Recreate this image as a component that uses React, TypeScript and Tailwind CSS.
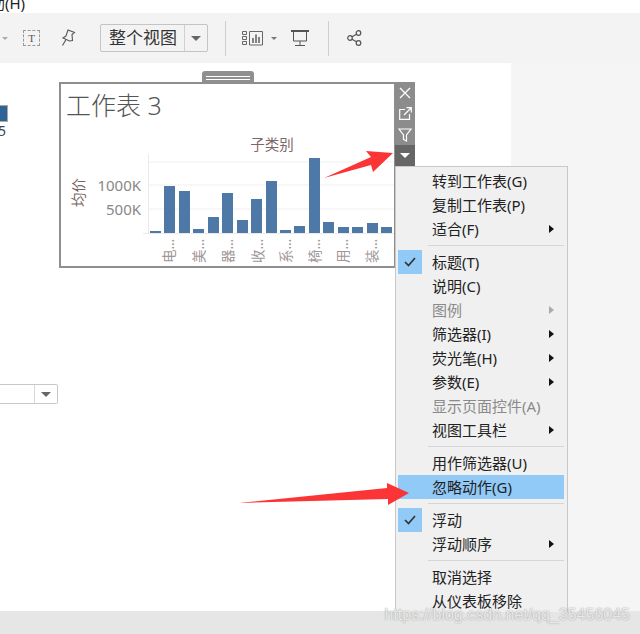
import React from 'react';

const FONT = '[font-family:"Noto_Sans","Noto_Sans_CJK_SC",sans-serif]';

type Entry =
  | { sep: true }
  | { sep?: false; label: string; sub?: boolean; off?: boolean; checked?: boolean; hot?: boolean };

const MENU: Entry[] = [
  { label: '转到工作表(G)' },
  { label: '复制工作表(P)' },
  { label: '适合(F)', sub: true },
  { sep: true },
  { label: '标题(T)', checked: true },
  { label: '说明(C)' },
  { label: '图例', sub: true, off: true },
  { label: '筛选器(I)', sub: true },
  { label: '荧光笔(H)', sub: true },
  { label: '参数(E)', sub: true },
  { label: '显示页面控件(A)', off: true },
  { label: '视图工具栏', sub: true },
  { sep: true },
  { label: '用作筛选器(U)' },
  { label: '忽略动作(G)', hot: true },
  { sep: true },
  { label: '浮动', checked: true },
  { label: '浮动顺序', sub: true },
  { sep: true },
  { label: '取消选择' },
  { label: '从仪表板移除' },
];

// x, top of each bar, baseline is y=233
const BARS = [
  [150, 231], [164, 186], [179, 191], [193, 229], [208, 217], [222, 193], [237, 220], [251, 199],
  [266, 181], [280, 230], [294, 226], [309, 158], [323, 222], [338, 227], [352, 227], [367, 223], [381, 227],
];

const LABELS: [number, string][] = [
  [169, '电…'], [199, '美…'], [228, '器…'], [258, '收…'], [286, '系…'], [315, '椅…'], [343, '用…'], [372, '装…'],
];

const Caret = ({ className = 'border-t-[#666]' }: { className?: string }) => (
  <span className={`block w-0 h-0 border-x-[5px] border-x-transparent border-t-[5px] ${className}`} />
);

const Toolbar = () => (
  <div className="h-[50px] bg-[#f3f3f3] flex items-center relative shrink-0">
    <div className="ml-[2px] w-[5px]"><span className="block w-0 h-0 border-x-[3px] border-x-transparent border-t-[3px] border-t-[#aaa]" /></div>
    <div className="ml-[16px] w-[17px] h-[16px] border border-dashed border-[#999] flex items-center justify-center text-[11px] leading-none text-[#555] [font-family:'Liberation_Serif',serif]">T</div>
    <svg className="ml-[21px]" width="15" height="18" viewBox="0 0 15 18" fill="none" stroke="#555" strokeWidth="1.1">
      <path d="M7 1l6.5 2.5-2.5 2 .5 6-3 .5L2 9l3-2z" />
      <path d="M5 10.5L1.5 16.5" />
    </svg>
    <div className="ml-[24px] w-[108px] h-[28px] border border-[#c4c4c4] rounded-[2px] flex">
      <div className="w-[84px] pl-[8px] text-[17px] leading-[26px] text-[#333] border-r border-[#d0d0d0]">整个视图</div>
      <div className="flex-1 flex items-center justify-center"><Caret /></div>
    </div>
    <div className="ml-[17px] w-[1px] h-[35px] bg-[#cfcfcf]" />
    <svg className="ml-[16px]" width="21" height="15" viewBox="0 0 21 15" fill="none" stroke="#666">
      <path d="M.5.5h4v3h-4zM.5 5.5h4v3h-4zM.5 10.5h4v3h-4zM7.5.5h13v13.5h-13z" />
      <path d="M11 12V7M14 12V3.5M17 12V6" strokeWidth="1.6" />
    </svg>
    <div className="ml-[8px]"><span className="block w-0 h-0 border-x-[3px] border-x-transparent border-t-[3px] border-t-[#777]" /></div>
    <svg className="ml-[14px]" width="18" height="17" viewBox="0 0 18 17" fill="none" stroke="#555">
      <path d="M0 1h18" strokeWidth="2" />
      <path d="M2.5 1.5v9.5h13V1.5M9 11v4.5M4 15.5h10" />
    </svg>
    <div className="ml-[19px] w-[1px] h-[35px] bg-[#cfcfcf]" />
    <svg className="ml-[18px]" width="16" height="16" viewBox="0 0 16 16" fill="none" stroke="#555" strokeWidth="1.2">
      <circle cx="11.5" cy="3" r="2.3" />
      <circle cx="3" cy="8" r="2.3" />
      <circle cx="11.5" cy="13" r="2.3" />
      <path d="M5 6.8l4.5-2.6M5 9.2l4.5 2.6" />
    </svg>
  </div>
);

const Worksheet = () => (
  <div className="absolute left-[59px] top-[82px] w-[337px] h-[186px] border-2 border-[#8f8f8f] bg-white">
    <div className="absolute left-[141px] top-[-13px] w-[52px] h-[13px] bg-[#8f8f8f] rounded-t-[3px] flex flex-col justify-center gap-[2px] px-[4px]">
      <div className="h-[1px] bg-white" />
      <div className="h-[1px] bg-white" />
    </div>
    <div className="pl-[5px] pt-[5px] h-[36px] text-[25px] leading-[32px] text-[#555] font-light">工作表 3</div>
    <svg className="block" width="333" height="146" viewBox="61 120 333 146">
      <path d="M148 162H394M148 185H394M148 209H394" stroke="#efefef" />
      <path d="M143 233.5H394M148.5 154V233" stroke="#eaeaea" />
      {BARS.map(([x, top]) => (
        <rect key={x} x={x} y={top} width={11} height={233 - top} fill="#4e79a7" />
      ))}
      <text x="272" y="150" textAnchor="middle" fontSize="14.5" fill="#7d6666">子类别</text>
      <text x="141" y="191" textAnchor="end" fontSize="15" fill="#888">1000K</text>
      <text x="141" y="215" textAnchor="end" fontSize="15" fill="#888">500K</text>
      <text transform="translate(84 207) rotate(-90)" fontSize="14.5" fill="#77675f">均价</text>
      {LABELS.map(([x, t]) => (
        <text key={x} transform={`translate(${x + 5} 263) rotate(-90)`} fontSize="13.5" fill="#a09696">{t}</text>
      ))}
    </svg>
  </div>
);

const SideButtons = () => (
  <div className="absolute left-[395px] top-[82px] w-[20px] flex flex-col bg-[#8c8c8c]">
    <div className="h-[21px] flex items-center justify-center">
      <svg width="12" height="12" viewBox="0 0 12 12" stroke="#fff" strokeWidth="1.3"><path d="M1 1l10 10M11 1L1 11" /></svg>
    </div>
    <div className="h-[21px] flex items-center justify-center">
      <svg width="13" height="13" viewBox="0 0 13 13" fill="none" stroke="#fff" strokeWidth="1.2"><path d="M6 2.5H.7v9.8h9.8V7M5 8l7-7M7.5.7h4.8v4.8" /></svg>
    </div>
    <div className="h-[21px] flex items-center justify-center">
      <svg width="14" height="14" viewBox="0 0 14 14" fill="none" stroke="#fff" strokeWidth="1.2"><path d="M1 1h12L8.5 7v6l-3-1.5V7z" /></svg>
    </div>
    <div className="h-[21px] bg-[#666] flex items-center justify-center">
      <Caret className="border-t-white" />
    </div>
  </div>
);

const ContextMenu = () => (
  <div className="absolute left-[395px] top-[166px] w-[173px] h-[446px] overflow-hidden bg-[#f0f0f0] border border-b-0 border-[#c8c8c8] pt-[2px] pl-[2px] pr-[3px]">
    {MENU.map((m, i) =>
      m.sep ? (
        <div key={i} className="h-[9px] flex items-center pl-[30px]">
          <div className="h-[1px] w-full bg-[#d6d6d6]" />
        </div>
      ) : (
        <div key={i} className={`h-[24px] flex items-center text-[15px] leading-[24px] ${m.hot ? 'bg-[#91c9f7]' : ''} ${m.off ? 'text-[#8a8a8a]' : 'text-[#222]'}`}>
          <div className={`w-[24px] h-[24px] flex items-center justify-center ${m.checked ? 'bg-[#91c9f7]' : ''}`}>
            {m.checked && (
              <svg width="12" height="10" viewBox="0 0 12 10" fill="none" stroke="#333" strokeWidth="1.7"><path d="M1 5l3.5 3.5L11 1" /></svg>
            )}
          </div>
          <span className="ml-[10px] flex-1 whitespace-nowrap">{m.label}</span>
          {m.sub && (
            <span className={`mr-[10px] block w-0 h-0 border-y-[4px] border-y-transparent border-l-[5px] ${m.off ? 'border-l-[#aaa]' : 'border-l-[#111]'}`} />
          )}
        </div>
      )
    )}
  </div>
);

const App: React.FC = () => {
  return (
    <div className={`relative w-[640px] h-[634px] overflow-hidden flex flex-col bg-white ${FONT}`}>
      {/* menu bar, only the tail of the last entry is in frame */}
      <div className="h-[13px] shrink-0 overflow-hidden flex justify-start">
        <div className="w-[25px] overflow-hidden flex justify-end">
          <span className="text-[15px] leading-[15px] -mt-[4px] text-[#222] whitespace-nowrap">助(H)</span>
        </div>
      </div>

      <Toolbar />

      <div className="flex flex-1 min-h-0">
        <div className="w-[511px] bg-white flex flex-col justify-between relative">
          <div className="mt-[42px]">
            <div className="w-[8px] h-[17px] bg-[#2f6497] border border-[#a9a9a9] border-l-0" />
            <div className="w-[6px] overflow-hidden flex justify-end text-[14px] leading-[18px] text-[#445]">5</div>
          </div>
          <div className="mb-[207px] w-[58px] h-[20px] bg-white border border-l-0 border-[#c8c8c8] rounded-r-[2px] flex">
            <div className="w-[35px] border-r border-[#d8d8d8]" />
            <div className="flex-1 flex items-center justify-center"><Caret className="border-t-[#666]" /></div>
          </div>
        </div>
        <div className="flex-1 bg-[#f5f5f5]" />
      </div>

      <div className="h-[23px] shrink-0 bg-[#e6e6e6]" />

      <Worksheet />
      <SideButtons />
      <ContextMenu />

      {/* red annotation arrows */}
      <svg className="absolute left-0 top-0 pointer-events-none" width="640" height="634" viewBox="0 0 640 634">
        <polygon points="324,178 371,157 366,151 393,153 373,172 371,165" fill="#fb3535" />
        <polygon points="239,503 387,488 387,483 409,493 388,505 388,499" fill="#fb3535" />
      </svg>

      {/* csdn watermark baked into the screenshot */}
      <div className="absolute right-[10px] top-[606px] text-[16px] leading-[18px] text-[#f2f2f2]/90 whitespace-nowrap [font-family:'Liberation_Sans',sans-serif] [text-shadow:0_0_1.5px_#8a8a8a]">
        https://blog.csdn.net/qq_35456045
      </div>
    </div>
  );
};

export default App;
